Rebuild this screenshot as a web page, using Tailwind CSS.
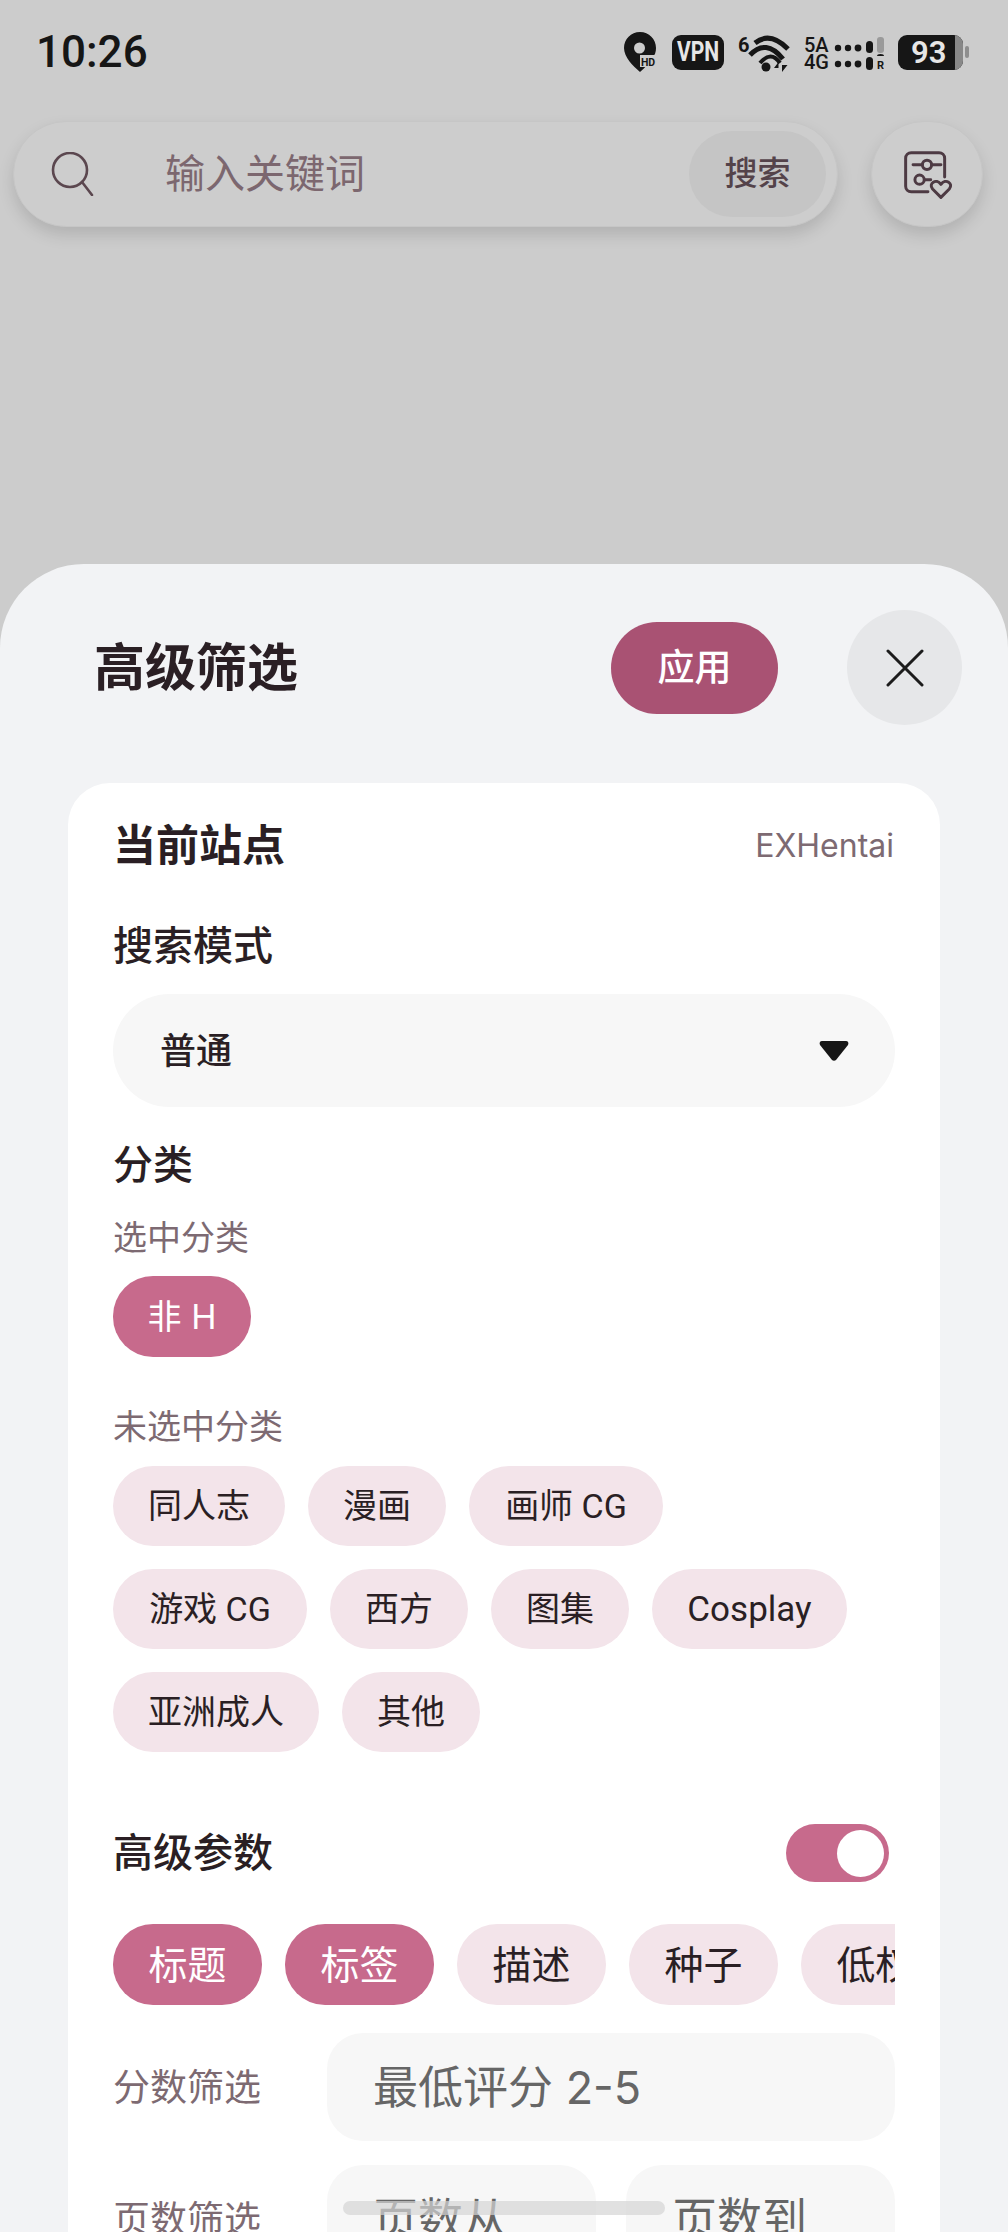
<!DOCTYPE html>
<html lang="zh">
<head>
<meta charset="utf-8">
<script src="https://cdn.jsdelivr.net/npm/@tailwindcss/browser@4"></script>
</head>
<body class="m-0">
<div class="relative w-[1008px] h-[2232px] overflow-hidden bg-[#cccccc] font-['Inter','Noto_Sans_CJK_SC',sans-serif] text-[#2a1f24]">

  <div class="h-[104px] flex items-center justify-between pl-[36px] pr-[39px]">
    <span class="text-[44px] font-medium leading-none text-[#161616] font-['Roboto',sans-serif]">10:26</span>
    <div class="flex items-center text-[#161616]">
      <svg class="w-[32px] h-[40px]" viewBox="0 0 32 40">
        <path d="M16 0C7 0 0 7 0 16c0 9 9 18 16 24 5-4 9-9 12-14 3-3 4-6 4-10C32 7 25 0 16 0z" fill="#161616"/>
        <circle cx="15.5" cy="16" r="5.5" fill="#cccccc"/>
        <rect x="16" y="23" width="16" height="12" fill="#cccccc"/>
        <text x="24" y="33.5" font-size="10.5" font-weight="700" text-anchor="middle" font-family="Roboto" fill="#161616">HD</text>
      </svg>
      <div class="ml-[16px] w-[52px] h-[35px] rounded-[9px] bg-[#161616] flex items-center justify-center text-[#e6e6e6] text-[27px] font-bold leading-none font-['Roboto',sans-serif]"><span class="scale-x-[0.78]">VPN</span></div>
      <svg class="ml-[14px] w-[54px] h-[40px]" viewBox="0 -2 54 40" fill="none" stroke="#161616">
        <text x="0" y="18" font-size="20" font-weight="700" font-family="Roboto" fill="#161616" stroke="none">6</text>
        <path d="M17 9Q32 -3 50 15" stroke-width="5"/>
        <path d="M12 21Q28 4 45 25" stroke-width="5"/>
        <path d="M22 29Q33 16 42 29" stroke-width="4"/>
        <circle cx="28" cy="33" r="4.5" fill="#161616" stroke="none"/>
        <path d="M40.5 38V28L36 34H40.5zM44 28V38L49.5 31H44z" fill="#161616" stroke="none"/>
      </svg>
      <div class="ml-[12px] w-[80px] mt-[3px] font-['Roboto',sans-serif] text-[20px] font-medium leading-[17px]">
        <div class="flex items-center h-[17px]">
          <span class="w-[28px] flex-none">5A</span>
          <svg class="w-[52px] h-[17px]" viewBox="0 0 52 17"><circle cx="6" cy="11" r="3.2" fill="#161616"/><circle cx="16" cy="11" r="3.2" fill="#161616"/><circle cx="26" cy="11" r="3.4" fill="#161616"/><rect x="34" y="4" width="7" height="12" rx="3.5" fill="#161616"/><rect x="45" y="0" width="7" height="16" rx="3" fill="#9a9a9a"/></svg>
        </div>
        <div class="flex items-center h-[17px]">
          <span class="w-[28px] flex-none">4G</span>
          <svg class="w-[52px] h-[17px]" viewBox="0 0 52 17"><circle cx="6" cy="10" r="3.2" fill="#161616"/><circle cx="16" cy="10" r="3.2" fill="#161616"/><circle cx="26" cy="10" r="3.4" fill="#161616"/><rect x="34" y="3" width="7" height="13" rx="3.5" fill="#161616"/><path d="M45 2a3.5 2 0 0 1 7 0z" fill="#161616"/><text x="48.5" y="15" font-size="11" font-weight="700" text-anchor="middle" font-family="Roboto" fill="#161616">R</text></svg>
        </div>
      </div>
      <div class="ml-[14px] flex items-center">
        <div class="relative w-[65px] h-[35px] rounded-[9px] bg-[#161616] overflow-hidden flex items-center pl-[13px] text-[#e6e6e6] text-[31px] font-semibold leading-none font-['Roboto',sans-serif]">93
          <div class="absolute right-0 top-0 bottom-0 w-[8px] bg-[#888888]"></div>
        </div>
        <div class="ml-[2px] w-[4px] h-[12px] rounded-full bg-[#8e8e8e]"></div>
      </div>
    </div>
  </div>

  <div class="mt-[17px] h-[106px] flex gap-[33px] pl-[13px] pr-[25px]">
    <div class="flex-1 flex items-center rounded-full bg-[#cdcdcd] border border-[#c6c6c6] shadow-[0_8px_16px_rgba(0,0,0,0.13)] pl-[37px] pr-[11px]">
      <svg class="w-[44px] h-[44px] flex-none" viewBox="0 0 44 44" fill="none" stroke="#5b474f" stroke-width="2.6" stroke-linecap="round"><circle cx="19" cy="18" r="17"/><path d="M31 30l10 13"/></svg>
      <span class="ml-[70px] text-[40px] leading-none text-[#7c676f]">输入关键词</span>
      <div class="ml-auto w-[137px] h-[86px] rounded-full bg-[#c5c5c5] flex items-center justify-center text-[33px] font-medium text-[#54434a]">搜索</div>
    </div>
    <div class="w-[112px] h-[106px] rounded-full bg-[#cdcdcd] border border-[#c6c6c6] shadow-[0_8px_16px_rgba(0,0,0,0.13)] flex items-center justify-center">
      <svg class="w-[52px] h-[52px] mt-[3px]" viewBox="0 0 56 56" fill="none" stroke="#4d3a43" stroke-width="3.2" stroke-linecap="round" stroke-linejoin="round">
        <path d="M29 45H11a6 6 0 0 1-6-6V9a6 6 0 0 1 6-6h30a6 6 0 0 1 6 6v20"/>
        <path d="M13 16h10M33 16h10M26 32h6"/>
        <circle cx="28" cy="16" r="5"/>
        <circle cx="20" cy="32" r="5"/>
        <path d="M43 51l-9-9c-5-6 4-12 9-5 5-7 14-1 9 5z"/>
      </svg>
    </div>
  </div>

  <div class="mt-[337px] h-[1668px] rounded-t-[84px] bg-[#f2f3f5] pt-[46px]">
    <div class="flex items-center h-[115px] pl-[94px] pr-[46px]">
      <span class="text-[51px] font-bold leading-none">高级筛选</span>
      <div class="ml-auto w-[167px] h-[92px] rounded-[46px] bg-[#a95273] flex items-center justify-center text-[37px] font-medium text-white">应用</div>
      <div class="ml-[69px] w-[115px] h-[115px] rounded-full bg-[#e6e7e9] flex items-center justify-center">
        <svg class="w-[38px] h-[38px]" viewBox="0 0 38 38" fill="none" stroke="#1c1c1c" stroke-width="3" stroke-linecap="round"><path d="M2 2l34 34M36 2L2 36"/></svg>
      </div>
    </div>

    <div class="mt-[58px] mx-[68px] rounded-t-[42px] bg-white px-[45px] pt-[32px] h-[1500px]">
      <div class="flex items-center justify-between h-[60px]">
        <span class="text-[43px] font-bold leading-none">当前站点</span>
        <span class="text-[32px] leading-none text-[#7d6a72] mr-[1px] mt-[2px]">EXHentai</span>
      </div>
      <div class="mt-[43px] h-[56px] flex items-center text-[40px] font-medium leading-none">搜索模式</div>
      <div class="mt-[20px] h-[113px] rounded-full bg-[#f7f7f7] flex items-center justify-between pl-[47px] pr-[46px]">
        <span class="text-[36px] font-medium leading-none">普通</span>
        <svg class="w-[30px] h-[22px]" viewBox="0 0 30 22"><path d="M3 1h24c2 0 3 2 2 4L17 20c-1 1-3 1-4 0L1 5C0 3 1 1 3 1z" fill="#161616"/></svg>
      </div>
      <div class="mt-[31px] h-[54px] flex items-center text-[40px] font-medium leading-none">分类</div>
      <div class="mt-[23px] h-[46px] flex items-center text-[34px] leading-none text-[#7d6a72]">选中分类</div>
      <div class="mt-[15px] flex">
        <div class="h-[81px] w-[138px] rounded-[40px] bg-[#c76a8c] text-white text-[34px] flex items-center justify-center">非 H</div>
      </div>
      <div class="mt-[47px] h-[46px] flex items-center text-[34px] leading-none text-[#7d6a72]">未选中分类</div>
      <div class="mt-[16px] flex flex-col gap-[23px] text-[34px] leading-none">
        <div class="flex gap-[23px]">
          <div class="h-[80px] w-[172px] rounded-[40px] bg-[#f3e4ea] flex items-center justify-center">同人志</div>
          <div class="h-[80px] w-[138px] rounded-[40px] bg-[#f3e4ea] flex items-center justify-center">漫画</div>
          <div class="h-[80px] w-[194px] rounded-[40px] bg-[#f3e4ea] flex items-center justify-center font-['Roboto','Noto_Sans_CJK_SC',sans-serif]">画师 CG</div>
        </div>
        <div class="flex gap-[23px]">
          <div class="h-[80px] w-[194px] rounded-[40px] bg-[#f3e4ea] flex items-center justify-center font-['Roboto','Noto_Sans_CJK_SC',sans-serif]">游戏 CG</div>
          <div class="h-[80px] w-[138px] rounded-[40px] bg-[#f3e4ea] flex items-center justify-center">西方</div>
          <div class="h-[80px] w-[138px] rounded-[40px] bg-[#f3e4ea] flex items-center justify-center">图集</div>
          <div class="h-[80px] w-[195px] rounded-[40px] bg-[#f3e4ea] flex items-center justify-center font-['Roboto','Noto_Sans_CJK_SC',sans-serif] text-[35px]">Cosplay</div>
        </div>
        <div class="flex gap-[23px]">
          <div class="h-[80px] w-[206px] rounded-[40px] bg-[#f3e4ea] flex items-center justify-center">亚洲成人</div>
          <div class="h-[80px] w-[138px] rounded-[40px] bg-[#f3e4ea] flex items-center justify-center">其他</div>
        </div>
      </div>
      <div class="mt-[72px] h-[58px] flex items-center justify-between">
        <span class="text-[40px] font-medium leading-none">高级参数</span>
        <div class="mr-[6px] w-[103px] h-[58px] rounded-full bg-[#c76a8c] flex items-center justify-end pr-[5px]">
          <div class="w-[47px] h-[47px] rounded-full bg-white"></div>
        </div>
      </div>
      <div class="mt-[42px] flex gap-[23px] overflow-hidden text-[39px] leading-none">
        <div class="flex-none w-[149px] h-[81px] rounded-[40px] bg-[#c76a8c] text-white flex items-center justify-center">标题</div>
        <div class="flex-none w-[149px] h-[81px] rounded-[40px] bg-[#c76a8c] text-white flex items-center justify-center">标签</div>
        <div class="flex-none w-[149px] h-[81px] rounded-[40px] bg-[#f3e4ea] flex items-center justify-center">描述</div>
        <div class="flex-none w-[149px] h-[81px] rounded-[40px] bg-[#f3e4ea] flex items-center justify-center">种子</div>
        <div class="flex-none w-[149px] h-[81px] rounded-[40px] bg-[#f3e4ea] flex items-center justify-center">低权</div>
      </div>
      <div class="mt-[28px] flex items-center">
        <span class="w-[214px] flex-none text-[37px] leading-none text-[#7d6a72]">分数筛选</span>
        <div class="flex-1 h-[108px] rounded-[36px] bg-[#f7f7f7] flex items-center pl-[46px] text-[45px] leading-none text-[#666666]">最低评分 2-5</div>
      </div>
      <div class="mt-[24px] flex items-center">
        <span class="w-[214px] flex-none text-[37px] leading-none text-[#7d6a72]">页数筛选</span>
        <div class="flex-1 flex gap-[30px]">
          <div class="flex-1 h-[108px] rounded-[36px] bg-[#f7f7f7] flex items-center pl-[46px] text-[45px] leading-none text-[#666666]">页数从</div>
          <div class="flex-1 h-[108px] rounded-[36px] bg-[#f7f7f7] flex items-center pl-[46px] text-[45px] leading-none text-[#666666]">页数到</div>
        </div>
      </div>
    </div>
  </div>

  <div class="absolute left-[343px] top-[2201px] w-[322px] h-[14px] rounded-full bg-[#d4d4d4]/70"></div>
</div>
</body>
</html>
